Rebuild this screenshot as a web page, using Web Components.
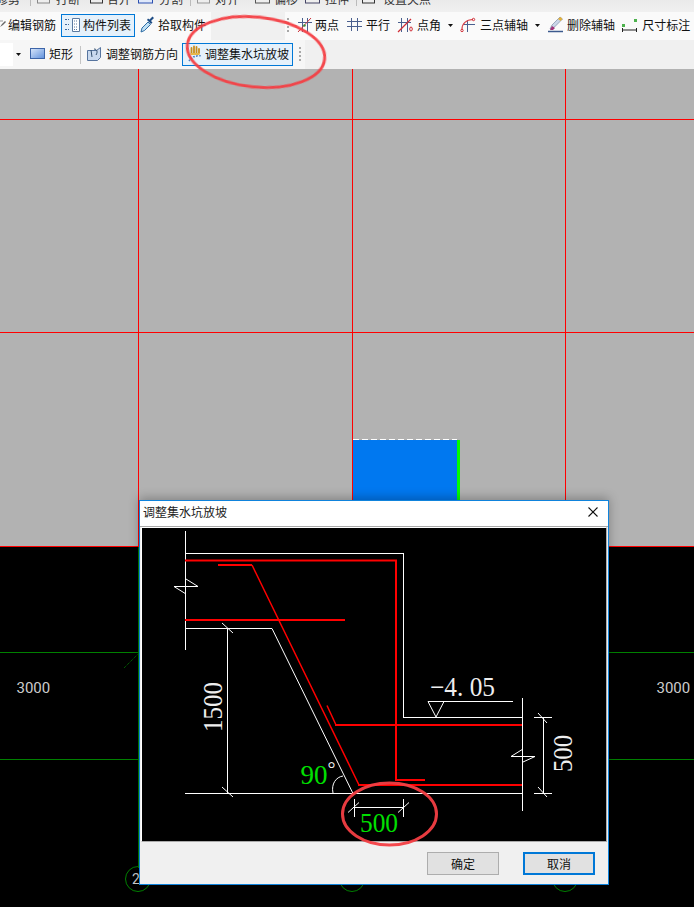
<!DOCTYPE html>
<html><head><meta charset="utf-8"><style>
html,body{margin:0;padding:0;background:#000}
body{width:694px;height:907px;overflow:hidden;font-family:"Noto Sans CJK SC","Liberation Sans",sans-serif}
</style></head><body>
<cad-app></cad-app>
<script>
const def=(n,html)=>customElements.define(n,class extends HTMLElement{constructor(){super();this.attachShadow({mode:'open'}).innerHTML=html;}});
def('tool-item',`<style>:host{display:inline-flex;flex:none;align-items:center;height:23px;padding-bottom:2px;font-size:12px;color:#111;white-space:nowrap;box-sizing:border-box;line-height:1}
:host([active]){border:1px solid #0078d7;background:#e5f1fb}
::slotted(svg){flex:none}</style><slot name="icon"></slot><slot></slot>`);
def('tool-bar',`<style>:host{display:flex;align-items:center;box-sizing:border-box;background:#f0f0f0;overflow:hidden}</style><slot></slot>`);
def('cad-dialog',`<style>
:host{position:absolute;left:139px;top:500px;width:470px;height:385px;box-sizing:border-box;border:1px solid #0f83dc;background:#f0f0f0;display:flex;flex-direction:column;box-shadow:0 -2px 10px rgba(0,0,0,.28)}
.title{height:25px;flex:none;background:#fff;display:flex;align-items:center;justify-content:space-between;padding:0 10px 3px 3px;box-sizing:border-box;font-size:12px;color:#222;line-height:1}
.rule{height:1px;flex:none;background:#a9a9a9}
.body{flex:none;height:313px;width:464px;margin:0 0 0 1px;border:1px solid #fff;border-right:1px solid #aaa;border-bottom:1px solid #aaa;background:#000}
.foot{flex:1;display:flex;justify-content:flex-end;align-items:center;gap:24px;padding:1px 13px 0 0}
button{width:72px;height:23px;box-sizing:border-box;border:1px solid #adadad;background:#e1e1e1;font:12px "Noto Sans CJK SC",sans-serif;color:#111;padding:0}
button.def{border:2px solid #0078d7}
svg{display:block}
</style>
<div class="title"><span>调整集水坑放坡</span><svg width="10" height="10" viewBox="0 0 10 10"><path d="M.5 .5l9 9M9.500 .5l-9 9" stroke="#111" stroke-width="1.100" fill="none"/></svg></div>
<div class="rule"></div>
<div class="body"><slot></slot></div>
<div class="foot"><button>确定</button><button class="def">取消</button></div>`);
const I={
list:`<svg slot="icon" width="16" height="16" viewBox="0 0 16 16"><g fill="#3f6a9e"><path d="M0 2h2v1H0zM3 2h1v1H3zM0 7h2v1H0zM3 7h1v1H3zM0 12h2v1H0zM3 12h1v1H3z"/></g><path d="M7.500 1.500h7v13h-7z" fill="#fff" stroke="#5b7aa0"/><path d="M9 4h4M9 7h4M9 10h4M9 12.500h4" stroke="#5b7aa0" stroke-dasharray="1 1"/></svg>`,
drop:`<svg slot="icon" width="15" height="17" viewBox="0 0 15 17"><path d="M1 16l1-4 6-6 2.500 2.500-6 6z" fill="#bfe0f5" stroke="#2e6da4"/><path d="M7 4l4 4 1.500-1.500L11 5l3-3-1.500-1.500-3 3L8 2.500z" fill="#1f4e86"/></svg>`,
pen:`<svg slot="icon" width="6" height="14" viewBox="0 0 6 14"><path d="M0 9l2-3 3-3 1 1-3 3z" fill="#666"/><path d="M0 3h3" stroke="#999"/></svg>`,
two:`<svg slot="icon" width="16" height="16" viewBox="0 0 16 16"><path d="M5.500 1v14M10.500 1v14M1 5.500h14" stroke="#4a5f8e"/><path d="M1 15L14 1" stroke="#c8313a"/><circle cx="7.500" cy="8.500" r="1.200" fill="#3a8f3a"/></svg>`,
para:`<svg slot="icon" width="15" height="15" viewBox="0 0 15 15"><path d="M4.500 1v13M10.500 1v13M0 4.500h15M0 9.500h15" stroke="#4a5f8e"/></svg>`,
ang:`<svg slot="icon" width="16" height="16" viewBox="0 0 16 16"><path d="M4.500 1v14M10.500 1v14M1 5.500h13" stroke="#4a5f8e"/><path d="M1 15L14 2" stroke="#d12d36" stroke-width="1.200"/><ellipse cx="14" cy="12" rx="1.300" ry="2" fill="none" stroke="#d12d36"/></svg>`,
arc:`<svg slot="icon" width="16" height="16" viewBox="0 0 16 16"><path d="M7.500 3v12M3 7.500h12" stroke="#4a5f8e"/><path d="M2 12C2 7 6 2.500 13 2.500" fill="none" stroke="#d9434b" stroke-width="1.200"/><circle cx="2" cy="13.500" r="1.200" fill="none" stroke="#d12d36"/><circle cx="13.500" cy="2.500" r="1.200" fill="none" stroke="#d12d36"/></svg>`,
del:`<svg slot="icon" width="17" height="17" viewBox="0 0 17 17"><path d="M1 15.500h15" stroke="#3c5a8e" stroke-width="1.500"/><path d="M3 13l2-4 8-8 2.500 2-8 8z" fill="#c9d5e8" stroke="#6a7a98" stroke-width=".6"/><path d="M11 3l2.500 2L15.500 3l-2-2z" fill="#e3b23a"/><path d="M3 14l2-4 3 2-2 2z" fill="#a0327a"/></svg>`,
dim:`<svg slot="icon" width="16" height="16" viewBox="0 0 16 16"><rect x="0" y="7" width="3" height="3" fill="#4db24d"/><rect x="12" y="2" width="3" height="3" fill="#4db24d"/><path d="M.5 11v4M14.500 11v4M1 13h13" stroke="#222"/></svg>`,
rect:`<svg slot="icon" width="15" height="11" viewBox="0 0 15 11"><defs><linearGradient id="r" x1="0" y1="0" x2="1" y2="1"><stop offset="0" stop-color="#dbe8fb"/><stop offset="1" stop-color="#5d8fdc"/></linearGradient></defs><rect x=".5" y=".5" width="14" height="10" fill="url(#r)" stroke="#3c64a8"/></svg>`,
dir:`<svg slot="icon" width="15" height="16" viewBox="0 0 15 16"><path d="M.5 4.500h9l4-3v10l-3 3H.5z" fill="#c9d9ee" stroke="#56749e"/><path d="M4 4l1 7M7 3c3 0 4 3 2 6" fill="none" stroke="#33506f"/></svg>`,
hand:`<svg slot="icon" width="15" height="17" viewBox="0 0 15 17"><path d="M3.500 8V3M6 8V1.500M8.500 8V2M11 8V4" stroke="#c98d1c" stroke-width="1.800" stroke-linecap="round"/><path d="M2.500 8h9v2h-9z" fill="#e6b749"/><path d="M1 16c3-4 7-6 13-5" fill="none" stroke="#4a7fc0" stroke-dasharray="1.500 1.500" stroke-width="1.500"/><path d="M2 12l9-1" stroke="#4a7fc0" stroke-dasharray="1 2"/></svg>`
};
const arrow=(ml)=>`<svg width="5" height="3" viewBox="0 0 5 3" style="flex:none;margin-left:${ml}px"><path d="M0 0h5L2.500 3z" fill="#111"/></svg>`;
const grip=(ml)=>`<span style="flex:none;margin-left:${ml}px;width:2px;height:15px;background:repeating-linear-gradient(#a8a8a8 0 2px,transparent 2px 4px)"></span>`;
const sep=(ml)=>`<span style="flex:none;margin-left:${ml}px;width:1px;height:18px;background:#c4c4c4"></span>`;
const it=(ml,gap,icon,t,extra='')=>`<tool-item style="margin-left:${ml}px;gap:${gap}px;${extra}">${icon}${t}</tool-item>`;
const top1=(ml,w,c)=>`<svg width="${w}" height="12" viewBox="0 0 ${w} 12" style="flex:none;margin-left:${ml}px"><rect x=".5" y="-6" width="${w-1}" height="9" fill="${c[0]}" stroke="${c[1]}"/></svg>`;
const t1=(ml,t)=>`<span class="t" style="margin-left:${ml}px">${t}</span>`;
def('cad-app',`<style>
:host{display:block;width:694px;height:907px;position:relative;overflow:hidden;background:#000}
.top{display:flex;flex-direction:column;height:69px}
.r1{height:12px;background:linear-gradient(#eaeaea,#f0f0f0);align-items:flex-start}
.t{flex:none;font-size:12px;line-height:12px;height:12px;transform:translateY(-7px);color:#333;white-space:nowrap}
.r2{height:28px;padding-bottom:1px;background:linear-gradient(90deg,#fafafa 0 211px,#f0f0f0 211px 285px,#fafafa 285px)}
.r3{height:29px;background:linear-gradient(90deg,#f6f6f6 0 305px,#f0f0f0 305px)}
.canvas{height:838px;display:block}
</style>
<div class="top">
<tool-bar class="r1">${t1(-4,'修剪')}<span style="flex:none;margin-left:10px;width:1px;height:6px;background:#bbb"></span>${top1(6,13,['#eee','#888'])}${t1(6,'打断')}${top1(10,13,['#eee','#333'])}${t1(4,'合并')}${top1(7,15,['#dfe8fa','#2a4fb0'])}${t1(6,'分割')}<span style="flex:none;margin-left:7px;width:1px;height:6px;background:#bbb"></span>${top1(6,13,['#eee','#999'])}${t1(5,'对齐')}${top1(16,15,['#eee','#555'])}${t1(4,'偏移')}${top1(7,15,['#eee','#446'])}${t1(5,'拉伸')}<span style="flex:none;margin-left:7px;width:1px;height:6px;background:#bbb"></span>${top1(5,13,['#eee','#333'])}${t1(8,'设置夹点')}</tool-bar>
<tool-bar class="r2">${it(0,2,I.pen,'编辑钢筋')}${it(5,2,I.list,'构件列表','padding-left:3px;padding-right:3px').replace('<tool-item','<tool-item active')}${it(5,3,I.drop,'拾取构件')}${grip(81)}${it(8,2,I.two,'两点')}${it(8,4,I.para,'平行')}${it(7,4,I.ang,'点角')}${arrow(7)}${it(7,4,I.arc,'三点辅轴')}${arrow(7)}${it(7,3,I.del,'删除辅轴')}${it(7,4,I.dim,'尺寸标注')}</tool-bar>
<tool-bar class="r3"><span style="flex:none;width:13px;height:23px;background:#fff"></span>${arrow(3)}${it(9,4,I.rect,'矩形')}${sep(7)}${it(6,4,I.dir,'调整钢筋方向')}${it(4,2,I.hand,'调整集水坑放坡','padding-left:5px;padding-right:3px').replace('<tool-item','<tool-item active')}${grip(6)}</tool-bar>
</div>
<svg class="canvas" width="694" height="838" viewBox="0 69 694 838">
<rect x="0" y="69" width="694" height="477" fill="#b2b2b2"/>
<path d="M0 119.500H694M0 332.500H694M138.500 69V546M352.500 69V546M565.500 69V546" stroke="#f00"/>
<rect x="353" y="440" width="104" height="106" fill="#0078f0"/>
<path d="M353 439.500H457" stroke="#fff" stroke-dasharray="6 3"/>
<rect x="457" y="440" width="3" height="106" fill="#00ff00"/>
<path d="M0 546.500H694" stroke="#f00"/>
<path d="M0 652.500H694M0 759.500H694M138.500 547V868" stroke="#008000"/>
<path d="M124 668L139 653" stroke="#008000" stroke-dasharray="1 1"/>
<text x="16.500" y="693" fill="#ccc" font-size="15" font-family="Roboto,'Liberation Sans',sans-serif">3000</text>
<text x="656.500" y="693" fill="#ccc" font-size="15" font-family="Roboto,'Liberation Sans',sans-serif">3000</text>
<g fill="none" stroke="#008000"><circle cx="138" cy="879" r="12.500"/><circle cx="352" cy="879" r="12.500"/><circle cx="565" cy="879" r="12.500"/></g>
<text x="132" y="884" fill="#ccc" font-size="14" font-family="Roboto,'Liberation Sans',sans-serif">2</text>
</svg>
<cad-dialog>
<svg width="464" height="313" viewBox="142 528 464 313" style="display:block">
<g fill="none" stroke="#fff" shape-rendering="crispEdges"><path d="M185.500 531V650M185.500 553.500H403.500V717.500H522.500M185.500 628.500H272M227.500 628V794M185 793.500H522.500M522.500 698V811M534 717.500H552M534 793.500H552M543.500 717V794M354.500 807.500H403.500M354.500 799V817M403.500 799V817"/></g>
<g fill="none" stroke="#fff"><path d="M272 628.500L353 793.500M222 623l11 10M222 787l11 10M538 713l9 10M538 787l9 10M348 812.500l11-10M398 812.500l11-10M186 579L198 586.500H174L186 594M523 749L511 756.500H535L523 762"/><path d="M333 793c-2-9 3-16 10-17"/><path d="M428 701.500H513M428 701.500L436 717L444 701.500"/></g>
<g fill="none" stroke="#f00"><path d="M185 560.500H396V780M185 620H345M218 565H252" stroke-width="2"/><path d="M252 565L359 785M327 705.500L336 725" stroke-width="1.500"/><path d="M335 725H522M395 780H425M358 785H522" stroke-width="2"/></g>
<g font-family="'Liberation Serif',serif" font-size="27">
<text transform="translate(222 732) rotate(-90)" fill="#eee" textLength="50" lengthAdjust="spacingAndGlyphs">1500</text>
<text transform="translate(572 772) rotate(-90)" fill="#eee" textLength="37" lengthAdjust="spacingAndGlyphs">500</text>
<text x="430" y="696" fill="#eee" textLength="65" lengthAdjust="spacingAndGlyphs">−4. 05</text>
<text x="300.500" y="784" fill="#00e000">90<tspan fill="#eee" font-size="20" dy="-8">°</tspan></text>
<text x="360" y="832" fill="#00e000" textLength="38" lengthAdjust="spacingAndGlyphs">500</text></g>
</svg>
</cad-dialog>
<svg style="position:absolute;left:0;top:0;pointer-events:none" width="694" height="907"><g fill="none" stroke="#f43f44" stroke-width="3" opacity=".95"><ellipse cx="256" cy="52" rx="69" ry="35" transform="rotate(6 256 52)"/><ellipse cx="389.500" cy="814" rx="47" ry="31"/></g></svg>
`);
</script></body></html>
